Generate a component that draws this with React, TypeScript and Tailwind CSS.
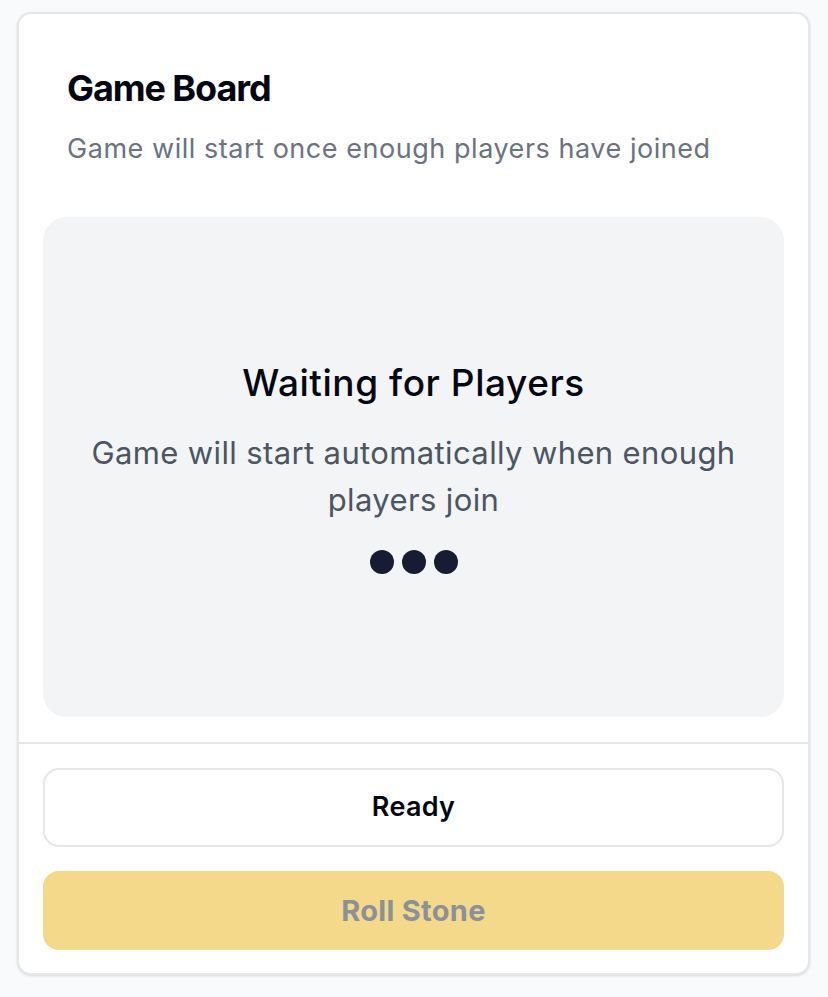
import React from "react";

export default function App() {
  return (
    <div
      className="min-h-[997px] w-[828px] bg-[#f9fafb] pt-3 pl-[17px] pr-[18px]"
      style={{ fontFamily: "Inter, 'Noto Sans', sans-serif" }}
    >
      <div className="flex h-[963px] flex-col rounded-[14px] border-2 border-[#e5e7eb] bg-white shadow-sm">
        <div className="px-12 pt-[52px]">
          <h1 className="text-[36px] font-bold leading-[44px] tracking-[-0.03em] text-[#030712]">
            Game Board
          </h1>
          <p className="mt-[21px] text-[27px] leading-[36px] tracking-[0.02em] text-[#6b7280]">
            Game will start once enough players have joined
          </p>
        </div>
        <div className="px-6 pt-[50px] pb-[25px]">
          <div className="flex h-[500px] flex-col items-center justify-center rounded-[24px] bg-[#f3f4f6] px-10 text-center">
            <h2 className="text-[37px] font-medium leading-[44px] tracking-[0.015em] text-[#030712]">
              Waiting for Players
            </h2>
            <p className="mt-[24px] text-[31px] leading-[47px] tracking-[0.012em] text-[#4b5563]">
              Game will start automatically when enough players join
            </p>
            <div className="mt-[27px] flex gap-2">
              <span className="h-6 w-6 rounded-full bg-[#161d33]" />
              <span className="h-6 w-6 rounded-full bg-[#161d33]" />
              <span className="h-6 w-6 rounded-full bg-[#161d33]" />
            </div>
          </div>
        </div>
        <div className="flex flex-col gap-[24px] border-t-2 border-[#e5e7eb] px-6 pt-[24px]">
          <button className="h-[79px] w-full rounded-[16px] border-2 border-[#e5e7eb] bg-white text-[27px] font-semibold tracking-[0.01em] text-[#030712]">
            Ready
          </button>
          <button className="h-[79px] w-full rounded-[16px] bg-[#f4d98a] text-[29px] font-bold tracking-[0.01em] text-[#8c9098]">
            Roll Stone
          </button>
        </div>
      </div>
    </div>
  );
}
